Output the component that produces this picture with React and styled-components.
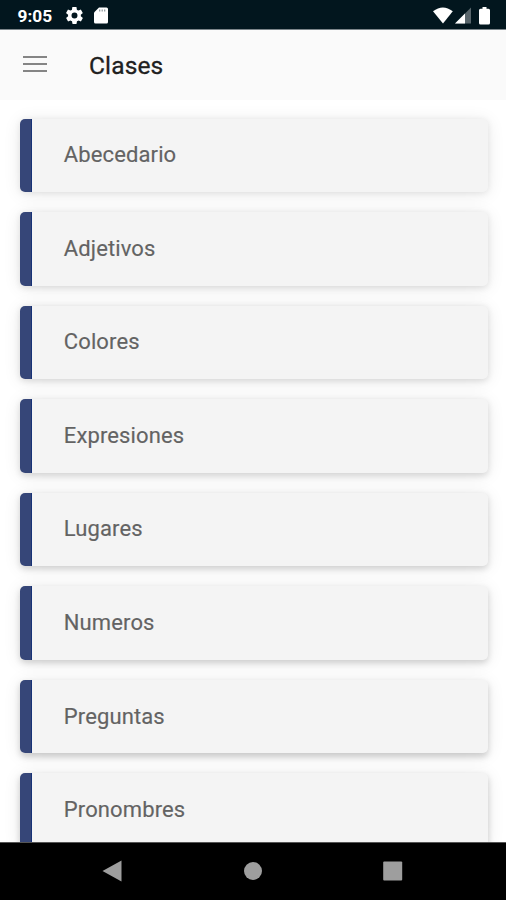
import React from 'react';
import styled, { createGlobalStyle } from 'styled-components';

const Global = createGlobalStyle`
  * { box-sizing: border-box; }
  body { margin: 0; background: #fff; font-family: Roboto, "Liberation Sans", sans-serif; }
`;
const Screen = styled.div`
  width: 506px; height: 900px; display: flex; flex-direction: column;
  overflow: hidden; background: #fff;
`;
const StatusBar = styled.header`
  height: 30px; flex: none; display: flex; align-items: center;
  padding: 0 16px 0 17.5px; background: #02161e; color: #fff;
  border-bottom: 1px solid #7c858a;
`;
const Clock = styled.span`
  width: 48px; font-size: 17.3px; font-weight: 700; line-height: 28px; padding-top: 2px;
`;
const StatusIcon = styled.svg`
  display: block; flex: none; margin-left: ${p => p.$gap || 0}px; margin-top: 2px;
`;
const Spacer = styled.div`flex: 1;`;
const Toolbar = styled.div`
  height: 70px; flex: none; display: flex; align-items: center;
  padding: 0 23px; background: #fafafa;
`;
const MenuButton = styled.button`
  width: 24px; height: 16px; padding: 0; border: 0; background: none;
  display: flex; flex-direction: column; justify-content: space-between;
  margin-bottom: 2px;
`;
const MenuLine = styled.span`
  width: 24px; height: 2px; background: #858585;
`;
const Title = styled.h1`
  margin: 0 0 0 42px; font-size: 24.5px; line-height: 32px; font-weight: 400;
  letter-spacing: 0.15px; color: #202020; -webkit-text-stroke: 0.3px #202020;
  padding-top: 2px;
`;
const List = styled.main`
  flex: 1; min-height: 0; overflow: hidden; display: flex; flex-direction: column;
  gap: 20px; padding: 18.5px 18.5px 0 20px;
`;
const Card = styled.div`
  height: 73.55px; flex: none; display: flex; align-items: center; overflow: hidden;
  border-radius: 5px; background: #f4f4f4;
  box-shadow: 0 ${p => p.$depth}px 6px rgba(0, 0, 0, ${p => p.$shade}), 0 2px 18px rgba(0, 0, 0, 0.09);
`;
const Accent = styled.span`
  width: 12px; align-self: stretch; background: #364678;
  border-right: 1px solid #173276;
`;
const Label = styled.span`
  margin-left: 31.8px; font-size: 22px; line-height: 28px; color: #636363;
  letter-spacing: 0.12px; -webkit-text-stroke: 0.15px #636363;
`;
const NavBar = styled.nav`
  height: 58px; flex: none; background: #000; border-top: 1px solid #555;
  display: flex; align-items: center; padding: 0 0 1px 102px;
`;
const NavIcon = styled.svg`
  display: block; flex: none; margin-right: ${p => p.$gap || 0}px;
`;

const lessons = ['Abecedario', 'Adjetivos', 'Colores', 'Expresiones', 'Lugares', 'Numeros', 'Preguntas', 'Pronombres'];

export default function App() {
  return (
    <Screen>
      <Global />
      <StatusBar>
        <Clock>9:05</Clock>
        <StatusIcon width="17" height="17" viewBox="2 2 20 20" fill="#fff">
          <path d="M19.4 13c.1-.6.1-1.300 0-2l2.100-1.600c.2-.2.300-.4.100-.7l-2-3.400c-.1-.2-.4-.3-.6-.2l-2.500 1a7.300 7.300 0 0 0-1.700-1l-.4-2.600c0-.3-.2-.5-.5-.5h-4c-.2 0-.4.2-.5.4l-.4 2.700a7.300 7.300 0 0 0-1.700 1l-2.500-1c-.2-.1-.5 0-.6.2l-2 3.400c-.1.2-.1.5.1.7L4.500 11c-.1.600-.1 1.300 0 2l-2.100 1.600c-.2.2-.3.400-.1.7l2 3.400c.1.2.4.3.6.2l2.500-1c.5.4 1.100.8 1.700 1l.4 2.600c0 .3.2.5.5.5h4c.2 0 .5-.2.5-.5l.4-2.600c.6-.2 1.200-.6 1.700-1l2.500 1c.2.100.5 0 .6-.2l2-3.400c.1-.2.1-.5-.1-.7zM12 15.500a3.500 3.500 0 1 1 0-7 3.500 3.500 0 0 1 0 7z" />
        </StatusIcon>
        <StatusIcon $gap={11.5} width="14" height="17" viewBox="0 0 14 17">
          <path fill="#fff" d="M5 .5h7.500q1.500 0 1.500 1.500v13q0 1.500-1.500 1.500h-11Q0 16.500 0 15V5.500z" />
          <path d="M5.700 2.500v2M8.200 2.500v2M10.700 2.500v2" stroke="#8b959a" strokeWidth="1.200" />
        </StatusIcon>
        <Spacer />
        <StatusIcon width="20" height="17" viewBox="0 0 20 17">
          <path fill="#fff" d="M0 4.300Q9.900-3.300 19.800 4.300L10 16.500z" />
        </StatusIcon>
        <StatusIcon $gap={2} width="16" height="17" viewBox="0 0 16 17">
          <path fill="#59666c" d="M16 .5v16H0z" />
          <path fill="#fff" d="M10 6.500v10H0z" />
        </StatusIcon>
        <StatusIcon $gap={8} width="11" height="18" viewBox="0 0 11 18">
          <path fill="#fff" d="M3.500 0h4v1.700H9.500q1.500 0 1.500 1.500v12.800q0 1.500-1.500 1.500h-8Q0 17.500 0 16V3.200Q0 1.700 1.500 1.700h2z" />
        </StatusIcon>
      </StatusBar>
      <Toolbar>
        <MenuButton aria-label="Menu"><MenuLine /><MenuLine /><MenuLine /></MenuButton>
        <Title>Clases</Title>
      </Toolbar>
      <List>
        {lessons.map((name, i) => (
          <Card key={name} $depth={1 + i * 0.4} $shade={0.08 + i * 0.014}>
            <Accent />
            <Label>{name}</Label>
          </Card>
        ))}
      </List>
      <NavBar>
        <NavIcon $gap={122} width="20" height="22" viewBox="0 0 20 22"><path fill="#9e9e9e" d="M.5 11 19.500.5v21z" /></NavIcon>
        <NavIcon $gap={121} width="18" height="18" viewBox="0 0 18 18"><circle cx="9" cy="9" r="9" fill="#9e9e9e" /></NavIcon>
        <NavIcon width="20" height="20" viewBox="0 0 20 20"><rect x=".2" y=".4" width="19" height="19" rx="1" fill="#9e9e9e" /></NavIcon>
      </NavBar>
    </Screen>
  );
}
